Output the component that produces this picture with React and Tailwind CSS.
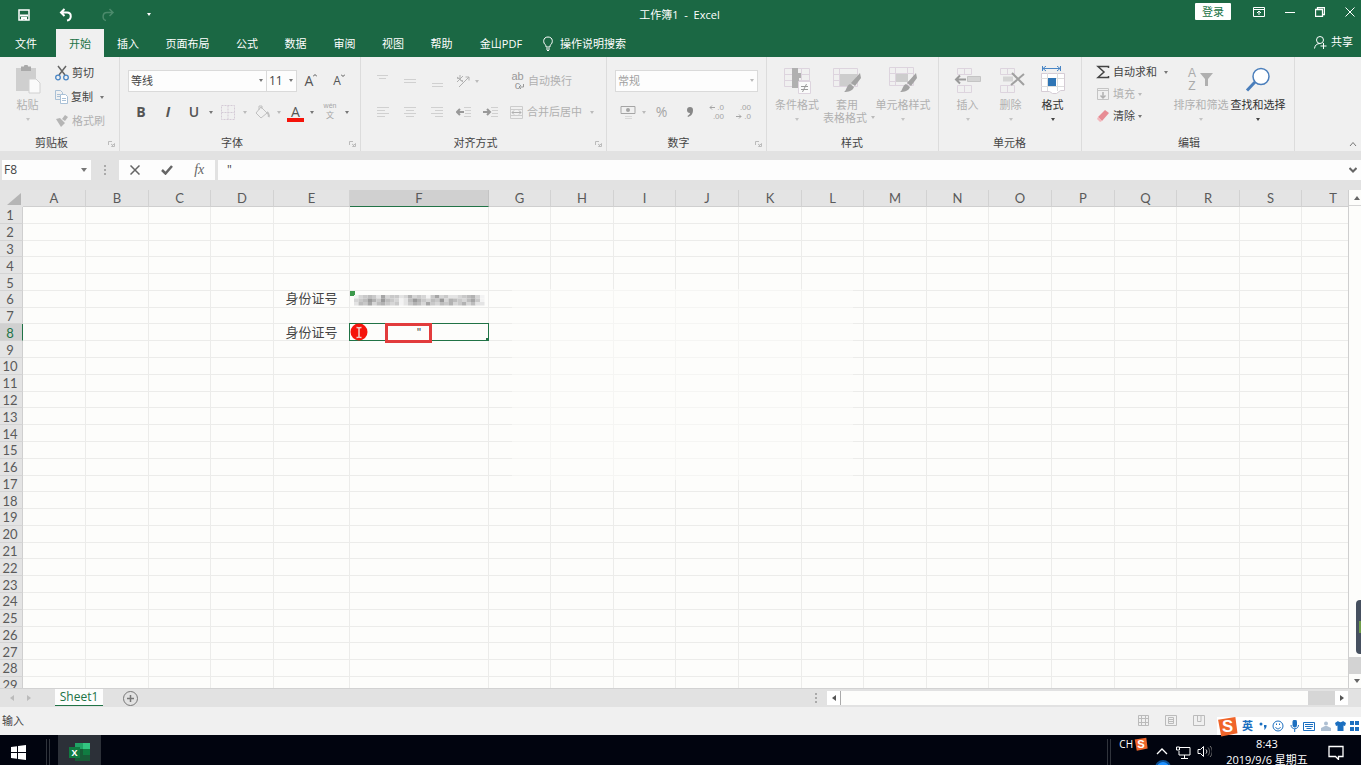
import clsx from 'clsx'

const COLUMNS = [
  ['A', 'w-[63px]'], ['B', 'w-[63px]'], ['C', 'w-[62px]'], ['D', 'w-[63px]'], ['E', 'w-[76px]'],
  ['F', 'w-[139px]'], ['G', 'w-[62px]'], ['H', 'w-[63px]'], ['I', 'w-[62px]'], ['J', 'w-[63px]'],
  ['K', 'w-[63px]'], ['L', 'w-[62px]'], ['M', 'w-[63px]'], ['N', 'w-[62px]'], ['O', 'w-[63px]'],
  ['P', 'w-[63px]'], ['Q', 'w-[62px]'], ['R', 'w-[63px]'], ['S', 'w-[62px]'], ['T', 'w-[63px]'],
]
const ROWS = Array.from({ length: 29 }, (_, i) => i + 1)
const TABS = [
  ['文件', 'w-14 pr-1'], ['开始', 'w-12'], ['插入', 'w-12'], ['页面布局', 'w-[71px]'], ['公式', 'w-12'], ['数据', 'w-[49px]'],
  ['审阅', 'w-[49px]'], ['视图', 'w-12'], ['帮助', 'w-[49px]'], ['金山PDF', 'w-[70px]'],
]
const MASKED = [
  'ecbabd8cbbdc9cbceb8cbddcba9ce',
  'cba79b7abceda79bcab7c9abca8be',
  'dab8ca9bcbedb9ac8bcab9cb9cadd',
]
const GREYS = { 7: '#9a9a9a', 8: '#a6a6a6', 9: '#b2b2b2', a: '#bdbdbd', b: '#c9c9c9', c: '#d6d6d6', d: '#e4e4e4', e: '#f3f3f3' }

function Svg({ w = 16, h = 16, children, className, ...rest }) {
  return (
    <svg width={w} height={h} viewBox={`0 0 ${w} ${h}`} fill="none" stroke="currentColor" className={clsx('shrink-0', className)} aria-hidden="true" {...rest}>
      {children}
    </svg>
  )
}

function Caret({ className = 'text-[#777]' }) {
  return (
    <Svg w={4} h={3} className={className} stroke="none">
      <path d="M0 0h4L2 3z" fill="currentColor" />
    </Svg>
  )
}

function Tool({ label, className, children }) {
  return (
    <button type="button" aria-label={label} className={clsx('flex h-6 items-center justify-center', className)}>
      {children}
    </button>
  )
}

function Group({ title, launcher, className, children }) {
  return (
    <section className={clsx('relative flex shrink-0 flex-col border-r border-[#dcdcdc]', className)}>
      <div className="flex flex-1 pt-1">{children}</div>
      <h2 className="h-[18px] text-center leading-5">{title}</h2>
      {launcher && (
        <button type="button" aria-label={`${title}设置`} className="absolute right-1 bottom-1 text-[#bbb]">
          <Svg w={8} h={6}><path d="M1.500 4V.5H5" /><path d="M7.500 2.500v3h-3zM4 3l2 1.500" /></Svg>
        </button>
      )}
    </section>
  )
}

function BigButton({ lines, icon, enabled, className, inlineCaret }) {
  return (
    <button type="button" className={clsx('flex flex-col items-center pt-1 leading-[13px] whitespace-nowrap', enabled ? 'text-[#333]' : 'text-[#b0b0b0]', className)}>
      <span className="mb-[3px] flex h-[30px] items-center">{icon}</span>
      <span>{lines[0]}</span>
      {inlineCaret ? (
        <span className="flex items-center gap-1 pl-1">{lines[1]}<Caret className="text-[#bbb]" /></span>
      ) : (
        <span className="pt-[7px]"><Caret className={enabled ? 'text-[#444]' : 'text-[#c4c4c4]'} /></span>
      )}
    </button>
  )
}

function TitleBar() {
  return (
    <header className="flex h-[29px] items-center text-white">
      <div className="flex flex-1 items-center pl-[17px]">
        <button type="button" aria-label="保存">
          <Svg w={14} h={14}><path d="M2 2h10v10H2z" strokeWidth="1.500" /><path d="M3 7.500h8M5 12V10h4v2" strokeWidth="2" /></Svg>
        </button>
        <button type="button" aria-label="撤销" className="ml-7">
          <Svg w={14} h={14} strokeWidth="2"><path d="M5.500 1L2 4.500 5.500 8M2.500 4.500H8c5 0 5 7 0 8" /></Svg>
        </button>
        <button type="button" aria-label="恢复" className="ml-7 text-[#4b8a6b]">
          <Svg w={14} h={14} strokeWidth="1.500"><path d="M8.500 1L12 4.500 8.500 8M11.500 4.500H6c-5 0-5 7-1 8" /></Svg>
        </button>
        <button type="button" aria-label="自定义快速访问工具栏" className="ml-8"><Caret className="text-white" /></button>
      </div>
      <h1 className="pr-[13px] whitespace-pre">{'工作簿1  -  Excel'}</h1>
      <div className="flex flex-1 items-center justify-end pr-1.5 pb-1.5">
        <button type="button" className="mr-[22px] h-[17px] w-9 rounded-[1px] bg-white leading-4 text-[#217346]">登录</button>
        <button type="button" aria-label="功能区显示选项" className="mr-5">
          <Svg w={12} h={10}><path d="M.5.5h11v9H.5zM.500 2.500h11M6 8V4M4 6l2-2 2 2" /></Svg>
        </button>
        <button type="button" aria-label="最小化" className="mr-5"><Svg w={10} h={10}><path d="M0 5.500h10" /></Svg></button>
        <button type="button" aria-label="还原" className="mr-5"><Svg w={10} h={10}><path d="M.5 2.500h7v7h-7zM2.500 2V.5h7v7H8" strokeWidth="1.300" /></Svg></button>
        <button type="button" aria-label="关闭"><Svg w={10} h={10}><path d="M.5.5l9 9M9.500.5l-9 9" /></Svg></button>
      </div>
    </header>
  )
}

function TabRow() {
  return (
    <nav className="flex h-7 text-white">
      {TABS.map(([name, width]) => (
        <button key={name} type="button" className={clsx('shrink-0 pt-px text-center whitespace-nowrap', width, name === '开始' && 'bg-[#f0f0f0] text-[#217346]')}>
          {name}
        </button>
      ))}
      <button type="button" className="ml-1.5 flex items-center gap-1.5 pt-px">
        <Svg w={12} h={15}><path d="M4 11V9.500C.5 7 .8 1 6 1s5.500 6 2 8.500V11zM4 13h4M5 14.500h2" /></Svg>
        操作说明搜索
      </button>
      <button type="button" className="ml-auto flex items-center gap-1 pr-2 pb-0.5">
        <Svg w={13} h={13}><circle cx="6" cy="4" r="3.500" /><path d="M.5 12.500C1 9 3 7.500 6 7.500M9.500 7v6M6.500 10h6" /></Svg>
        共享
      </button>
    </nav>
  )
}

function ClipboardGroup() {
  return (
    <Group title="剪贴板" launcher className="w-[120px] [&>h2]:pr-4">
      <button type="button" className="flex w-[55px] shrink-0 flex-col items-center pt-1 leading-[13px] text-[#b0b0b0]">
        <Svg w={26} h={30} className="mb-[3px]" stroke="none">
          <path d="M1 3h20v23H1z" fill="#cfcfcf" /><path d="M6 1.500h3a2 2 0 0 1 4 0h3V6H6z" fill="#aaa" />
          <path d="M14 14h7l4 4v10H14z" fill="#fafafa" stroke="#d0d0d0" />
        </Svg>
        粘贴
        <span className="pt-[7px]"><Caret className="text-[#c4c4c4]" /></span>
      </button>
      <div className="flex flex-col whitespace-nowrap text-[#444]">
        <button type="button" className="flex h-6 items-center gap-[3px]">
          <Svg w={14} h={16}><path d="M3 1l7 9M11 1L4 10" stroke="#666" strokeWidth="1.500" /><g stroke="#4a86c5" strokeWidth="1.300"><circle cx="3" cy="12.500" r="2.300" /><circle cx="11" cy="12.500" r="2.300" /></g></Svg>
          剪切
        </button>
        <button type="button" className="flex h-6 items-center gap-[3px]">
          <Svg w={13} h={14} stroke="#a9c0d6"><path d="M.5.500h5l2 2v7h-7zM2 4.500h3M2 6.500h3" /><path d="M5.500 4.500h5l2 2v7h-7z" fill="#fff" /><path d="M7 8.500h4M7 10.500h4" /></Svg>
          复制
          <span className="ml-1"><Caret /></span>
        </button>
        <button type="button" className="flex h-6 items-center gap-[3px] pl-px text-[#b0b0b0]">
          <Svg w={13} h={12} stroke="none"><path d="M9 0l3 2-3 4-3-2zM0 4l4-1 5 5-4 4z" fill="#b5b5b5" /></Svg>
          格式刷
        </button>
      </div>
    </Group>
  )
}

function FontGroup() {
  return (
    <Group title="字体" launcher className="w-[241px] pr-2 pl-2 [&>h2]:pr-4">
      <div className="flex-1">
        <div className="flex items-center pt-2">
          <span className="relative">
            <select aria-label="字体名称" className="block h-[22px] w-[139px] appearance-none border border-[#dadada] bg-[#fdfdfd] px-0.5 text-[#444]"><option>等线</option></select>
            <span className="pointer-events-none absolute top-[9px] right-1"><Caret /></span>
          </span>
          <span className="relative -ml-px">
            <select aria-label="字号" className="block h-[22px] w-[31px] appearance-none border border-[#dadada] bg-[#fdfdfd] px-0.5 text-xs text-[#444]"><option>11</option></select>
            <span className="pointer-events-none absolute top-[9px] right-1"><Caret /></span>
          </span>
          <Tool label="增大字号" className="w-7 text-sm text-[#555]">A<Svg w={4} h={14}><path d="M0 2.500l2-2 2 2" /></Svg></Tool>
          <Tool label="减小字号" className="w-7 text-xs text-[#555]">A<Svg w={4} h={14}><path d="M0 .5l2 2 2-2" /></Svg></Tool>
        </div>
        <div className="flex items-center pt-[7px] text-[#555]">
          <Tool className="w-[26px] text-sm font-bold">B</Tool>
          <Tool className="w-7 text-sm font-bold italic">I</Tool>
          <Tool className="w-6 text-sm font-semibold">U</Tool>
          <Tool label="下划线选项" className="w-[9px]"><Caret /></Tool>
          <Tool label="边框" className="w-[26px] text-[#d4cbd6]"><Svg w={14} h={15}><path d="M.5.5h13v14H.500zM7 .5v14M.5 7.500h13" strokeDasharray="2 1" /></Svg></Tool>
          <Tool label="边框选项" className="w-2"><Caret className="text-[#bbb]" /></Tool>
          <Tool label="填充颜色" className="w-[27px] text-[#c0c0c0]"><Svg w={15} h={14}><path d="M6 2l6 6-6 5-5-5zM4 5V1h3v3" /><path d="M12 7c2 2 2 4 1.500 5" strokeWidth="2" /></Svg></Tool>
          <Tool label="填充颜色选项" className="w-1.5"><Caret className="text-[#bbb]" /></Tool>
          <Tool label="字体颜色" className="w-[27px] flex-col pt-0.5 text-sm leading-[13px]">A<span className="h-1 w-[17px] shrink-0 bg-[#f5130a]" /></Tool>
          <Tool label="字体颜色选项" className="w-1.5"><Caret /></Tool>
          <Tool label="拼音" className="w-[30px] flex-col font-['Liberation_Sans','Noto_Sans_CJK_SC',sans-serif] text-[8px] leading-[8px] text-[#a5a5a5]"><span className="text-[7px]">wén</span><span className="leading-[12px]">文</span></Tool>
          <Tool label="拼音选项" className="w-1"><Caret /></Tool>
        </div>
      </div>
    </Group>
  )
}

function AlignGroup() {
  const v = ['M1 1.500h11M3 4.500h7', 'M1 5.500h12M1 8.500h12', 'M2 9.500h11M2 12.500h11']
  const h = ['M1 2.500h12M1 5.500h8M1 8.500h12M1 11.500h8', 'M1 2.500h12M3 5.500h8M1 8.500h12M3 11.500h8', 'M1 2.500h12M5 5.500h8M1 8.500h12M5 11.500h8']
  return (
    <Group title="对齐方式" launcher className="w-[246px] pr-2 pl-2 [&>h2]:pr-4">
      <div className="flex-1 text-[#b0b0b0]">
        <div className="flex items-center pt-2">
          {v.map((d, i) => <Tool key={d} label={['顶端对齐', '垂直居中', '底端对齐'][i]} className="w-[27px] text-[#d0d0d0]"><Svg w={14} h={14}><path d={d} /></Svg></Tool>)}
          <Tool label="方向" className="w-[25px]"><Svg w={14} h={14}><path d="M3 13L13 3M13 3H9.500M13 3v3.500" /><path d="M1 3l6 5M1 8l6-6M1 5c2-3 4 4 6 1M4 1v5" /></Svg></Tool>
          <Tool label="方向选项" className="w-1"><Caret className="text-[#bbb]" /></Tool>
          <button type="button" className="ml-8 flex h-6 items-center gap-1">
            <span className="relative flex w-[13px] flex-col font-['Liberation_Sans',sans-serif] text-[11px] leading-[9px] text-[#999]"><span>ab</span><span>c</span><Svg w={6} h={6} className="absolute right-0 bottom-0"><path d="M5.500 0v3H1M3 1L1 3l2 2" /></Svg></span>
            自动换行
          </button>
        </div>
        <div className="flex items-center pt-[7px]">
          {h.map((d, i) => <Tool key={d} label={['左对齐', '居中', '右对齐'][i]} className="w-[27px] text-[#d0d0d0]"><Svg w={14} h={14}><path d={d} /></Svg></Tool>)}
          <Tool label="减少缩进量" className="w-[27px]"><Svg w={15} h={12}><path d="M8 1.500h7M9 4.500h6M9 7.500h6M8 10.500h7" stroke="#d0d0d0" /><path d="M8 6H1M4 3L1 6l3 3" stroke="#999" strokeWidth="2" /></Svg></Tool>
          <Tool label="增加缩进量" className="w-[27px]"><Svg w={15} h={12}><path d="M8 1.500h7M9 4.500h6M9 7.500h6M8 10.500h7" stroke="#d0d0d0" /><path d="M0 6h7M4 3l3 3-3 3" stroke="#999" strokeWidth="2" /></Svg></Tool>
          <button type="button" className="ml-1.5 flex h-6 items-center gap-1 whitespace-nowrap">
            <Svg w={13} h={13}><path d="M.5.5h12v12H.5zM.5 3.500h12M.5 9.500h12" stroke="#ccc" /><path d="M2 6.500h9M4 4.500l-2 2 2 2M9 4.500l2 2-2 2" /></Svg>
            合并后居中
            <span className="ml-1"><Caret className="text-[#bbb]" /></span>
          </button>
        </div>
      </div>
    </Group>
  )
}

function NumberGroup() {
  const decimal = "w-[27px] flex-col items-end pr-1.5 font-['Liberation_Sans',sans-serif] text-[8px] leading-[9px]"
  return (
    <Group title="数字" launcher className="w-[160px] pr-2 pl-2 [&>h2]:pr-4">
      <div className="flex-1 text-[#a5a5a5]">
        <div className="relative pt-[9px]">
          <select aria-label="数字格式" className="block h-[22px] w-[143px] appearance-none border border-[#dadada] bg-[#fdfdfd] px-0.5 text-[#a0a0a0]"><option>常规</option></select>
          <span className="pointer-events-none absolute top-[18px] right-1"><Caret className="text-[#bbb]" /></span>
        </div>
        <div className="flex items-center pt-2">
          <Tool label="会计数字格式" className="w-[26px]"><Svg w={16} h={14}><path d="M4 1.500H1v7h3M12 1.500h3v7h-3M4 1.500h8M4 8.500h8" strokeDasharray="9 0" /><circle cx="8" cy="5" r="2" fill="currentColor" stroke="none" /><path d="M5 11.500h7M5 13.500h7" stroke="#d8d8d8" /></Svg></Tool>
          <Tool label="会计格式选项" className="w-1.5"><Caret className="text-[#bbb]" /></Tool>
          <Tool className="w-[29px] text-sm">%</Tool>
          <Tool label="千位分隔样式" className="w-[27px]"><Svg w={8} h={12} stroke="none"><path d="M4 1a3 3 0 0 1 3 3c0 4-2 6-5 7l-.5-1C3 9 4 8 4 7a3 3 0 0 1 0-6z" fill="#888" /></Svg></Tool>
          <Tool label="增加小数位数" className={decimal}><span className="flex items-center gap-0.5"><Svg w={6} h={5}><path d="M6 2.500H1M3 .5l-2 2 2 2" /></Svg>.0</span><span>.00</span></Tool>
          <Tool label="减少小数位数" className={decimal}><span>.00</span><span className="flex items-center gap-0.5"><Svg w={6} h={5}><path d="M0 2.500h5M3 .5l2 2-2 2" /></Svg>.0</span></Tool>
        </div>
      </div>
    </Group>
  )
}

function StylesGroup() {
  const brush = <path d="M27 7l1 5-6 8-4-3zM17 18l4 3c-1 4-6 5-10 5 3-2 2-6 6-8z" fill="#a3a3a3" stroke="none" />
  return (
    <Group title="样式" className="w-[172px] pl-[7px] [&>h2]:pr-2">
      <BigButton className="w-[46px]" lines={['条件格式']} icon={<Svg w={28} h={28} stroke="#ddd4de"><path d="M1.500 2.500h25v18h-25zM1.500 8.500h25M1.500 14.500h25M18.500 2v18" /><path d="M9 2h6v5h3v5h-2v4h-1v6H9z" fill="#b0b0b0" stroke="none" /><path d="M15.500 15.500h12v12h-12z" fill="#fafafa" /><path d="M18 20.500h7M18 23.500h7M23.500 18l-4 8" stroke="#999" /></Svg>} />
      <BigButton className="w-[54px]" lines={['套用', '表格格式']} inlineCaret icon={<Svg w={28} h={28} stroke="#ddd4de"><path d="M.5 2.500h24v18H.5zM.5 8.500h24M.5 14.500h24M6.500 2v18" /><path d="M7 8h18l-6 12H7z" fill="#cdcdcd" stroke="none" />{brush}</Svg>} />
      <BigButton className="w-[58px]" lines={['单元格样式']} icon={<Svg w={28} h={28} stroke="#ddd4de"><path d="M.5 1.500h24v18H.5zM.5 7.500h24M.5 15.500h24M6.500 1v18M18.500 1v18" /><path d="M7 8h12v8H7z" fill="#cdcdcd" stroke="none" />{brush}</Svg>} />
    </Group>
  )
}

function CellsGroup() {
  const grid = <path d="M3.500 1.500h14v6h-14zM10.500 1.500v6M3.500 18.500h14v7h-14zM10.500 18.500v7" stroke="#ddd4de" />
  return (
    <Group title="单元格" className="w-[143px] pl-[7px] [&>h2]:pr-2">
      <BigButton className="w-[43px]" lines={['插入']} icon={<Svg w={27} h={27}>{grid}<path d="M13.500 9.500h13v5h-13z" fill="#d4d4d4" stroke="#c4c4c4" /><path d="M12 12.500H2M6 8.500l-4 4 4 4" stroke="#9a9a9a" strokeWidth="2" /></Svg>} />
      <BigButton className="w-[43px]" lines={['删除']} icon={<Svg w={28} h={27}>{grid}<path d="M6 9.500h10v5H6z" fill="#d4d4d4" stroke="none" /><path d="M15 6l12 12M27 7L14 18" stroke="#a0a0a0" strokeWidth="2" /></Svg>} />
      <BigButton enabled className="w-[41px]" lines={['格式']} icon={<Svg w={26} h={28}><path d="M3 2.500h17M6 0L3 2.500 6 5M17 0l3 2.500L17 5M2.500 0v5M20.500 0v5" stroke="#4a86c5" /><path d="M1.500 7.500h23v17h-4l-4 3h-4l-3-2h-8z" fill="#fff" stroke="#d5ccd5" /><path d="M7.500 7v18M17.500 7v18M1 12.500h23M1 20.500h23" stroke="#ddd" /><path d="M8 12h8v8H8z" fill="#2f75b5" stroke="none" /></Svg>} />
    </Group>
  )
}

function EditGroup() {
  return (
    <Group title="编辑" className="w-[213px] pl-[14px] [&>h2]:pr-3">
      <div className="flex w-[78px] flex-col whitespace-nowrap text-[#444]">
        <button type="button" className="flex h-[22px] items-center gap-[3px]">
          <Svg w={14} h={14} strokeWidth="1.500"><path d="M12.500 3V1.500H2L8 7l-6 5.500h10.500V11" /></Svg>
          自动求和
          <span className="ml-1"><Caret /></span>
        </button>
        <button type="button" className="flex h-[22px] items-center gap-[3px] text-[#b0b0b0]">
          <Svg w={14} h={13}><path d="M1.500.5h11v11h-11zM1 2.500h12" stroke="#c4c4c4" /><path d="M7 4v6M4.500 7.500L7 10l2.500-2.500" strokeWidth="1.500" /></Svg>
          填充 <Caret className="text-[#bbb]" />
        </button>
        <button type="button" className="flex h-[22px] items-center gap-[3px]">
          <Svg w={14} h={12} stroke="none"><path d="M9 0l4 3-7 8-4-4z" fill="#e78c94" /><path d="M2 7l4 4-2 1-3-3z" fill="#f3b8bd" /></Svg>
          清除 <Caret />
        </button>
      </div>
      <BigButton className="w-[54px]" lines={['排序和筛选']} icon={<span className="flex items-center"><span className="flex flex-col font-['Liberation_Sans',sans-serif] text-[12px] leading-[13px] text-[#aaa]"><span>A</span><span>Z</span></span><Svg w={14} h={14} stroke="none" className="ml-1"><path d="M0 0h13L8 6v7H5V6z" fill="#b0b0b0" /></Svg></span>} />
      <BigButton enabled className="w-[60px]" lines={['查找和选择']} icon={<Svg w={26} h={26}><circle cx="16" cy="9.500" r="8" fill="#fff" stroke="#4a7ebb" strokeWidth="1.500" /><path d="M10 15l-8 8.500" stroke="#4a7ebb" strokeWidth="3" /></Svg>} />
    </Group>
  )
}

function FormulaBar() {
  return (
    <div className="flex h-5 items-stretch text-[#444]">
      <div className="ml-0.5 flex w-[89px] items-center bg-[#fdfdfd] pr-1">
        <input aria-label="名称框" defaultValue="F8" className="w-full min-w-0 px-0.5 text-xs outline-none" />
        <Svg w={6} h={4} stroke="none"><path d="M0 0h6L3 4z" fill="#777" /></Svg>
      </div>
      <div className="flex w-7 items-center justify-center text-[#aaa]"><Svg w={2} h={11} stroke="none" fill="currentColor"><path d="M0 0h2v2H0zM0 4h2v2H0zM0 8h2v2H0z" /></Svg></div>
      <div className="flex w-24 items-center justify-around bg-[#fdfdfd] text-[#666]">
        <button type="button" aria-label="取消"><Svg w={10} h={10} strokeWidth="1.500"><path d="M.5.500l9 9M9.500.5l-9 9" /></Svg></button>
        <button type="button" aria-label="输入"><Svg w={12} h={10} strokeWidth="2.500"><path d="M1 5l3.500 3.500L11 1" /></Svg></button>
        <button type="button" aria-label="插入函数" className="font-['Liberation_Serif',serif] text-sm leading-5 italic">fx</button>
      </div>
      <input aria-label="编辑栏" defaultValue={'"'} className="ml-[3px] min-w-0 flex-1 bg-[#fdfdfd] px-[9px] text-xs outline-none" />
      <button type="button" aria-label="展开编辑栏" className="bg-[#fdfdfd] pr-1 text-[#666]"><Svg w={8} h={6} strokeWidth="2"><path d="M.5 1L4 4.500 7.500 1" /></Svg></button>
    </div>
  )
}

function MaskedId() {
  return (
    <span className="relative block h-full">
      <Svg w={6} h={6} className="absolute top-0 left-0" stroke="none"><path d="M0 0h5v5H0z" fill="#3d9a4c" /></Svg>
      <Svg w={134} h={12} stroke="none" className="absolute top-[3px] left-1">
        {MASKED.map((line, y) => [...line].map((c, x) => (
          <rect key={`${x}-${y}`} x={x * 4.500} y={y * 3.500 + 1} width="4.500" height="3.500" fill={GREYS[c]} />
        )))}
      </Svg>
    </span>
  )
}

function ActiveCell() {
  return (
    <span className="relative block h-full text-center">
      {'"'}
      <span className="absolute -inset-px border border-[#217346]" />
      <span className="absolute -right-px -bottom-px size-[3px] bg-[#217346]" />
      <span className="absolute -top-px left-[35px] h-5 w-[47px] border-[3px] border-[#e23c3c]" />
      <Svg w={18} h={18} className="absolute -top-px left-0">
        <circle cx="9" cy="9" r="8.500" fill="#f5140c" stroke="none" />
        <path d="M6.500 4.500c1 0 2 0 2.500.5.5-.5 1.500-.5 2.500-.5M9 5v9M6.500 14.500c1 0 2 0 2.500-.5.5.5 1.500.5 2.500.5" stroke="#f0d0cc" strokeWidth="1.500" />
      </Svg>
    </span>
  )
}

function cellContent(row, col) {
  if (col === 'E' && (row === 6 || row === 8)) return '身份证号'
  if (col === 'F' && row === 6) return <MaskedId />
  if (col === 'F' && row === 8) return <ActiveCell />
  return null
}

function Grid() {
  return (
    <div className="relative min-w-0 flex-1 overflow-hidden bg-[#fdfdfb]">
      <table className="h-[504px] w-[1365px] table-fixed border-separate border-spacing-0 font-['Lato','Noto_Sans_CJK_SC',sans-serif] text-[#5a5a5a]">
        <colgroup>
          <col className="w-[23px]" />
          {COLUMNS.map(([name, width]) => <col key={name} className={width} />)}
        </colgroup>
        <thead>
          <tr className="h-[17px] bg-[#e4e4e4] text-[13px] leading-4">
            <th className="p-0" aria-label="全选"><Svg w={14} h={12} className="ml-[7px]" stroke="none"><path d="M14 0v12H0z" fill="#b5b5b5" /></Svg></th>
            {COLUMNS.map(([name]) => (
              <th key={name} scope="col" className={clsx('border-r border-b p-0 font-normal', name === 'F' ? 'border-r-[#c4c4c4] border-b-[#217346] bg-[#d0d0d0]' : 'border-r-[#d2d2d2] border-b-[#cfcfcf]')}>{name}</th>
            ))}
          </tr>
        </thead>
        <tbody>
          {ROWS.map((row) => (
            <tr key={row} className="text-xs leading-[15px]">
              <th scope="row" className={clsx('h-4 border-r border-b border-b-[#d4d4d4] p-0 pt-px pr-0.5 text-[13px] leading-[14px] font-normal', row === 8 ? 'border-r-[#217346] bg-[#d0d0d0] text-[#217346]' : 'border-r-[#cfcfcf] bg-[#e4e4e4]')}>{row}</th>
              {COLUMNS.map(([col]) => (
                <td key={col} className={clsx('h-4 border-r border-b border-[#ececea] p-0 text-center text-[#444]', col === 'E' && 'text-[13px]')}>{cellContent(row, col)}</td>
              ))}
            </tr>
          ))}
        </tbody>
      </table>
      {/* faded patch over the middle of the sheet */}
      <div className="absolute top-[99px] left-[512px] h-[191px] w-[341px] bg-[#fdfdfb]/50" />
    </div>
  )
}

function VerticalScroll() {
  return (
    <div className="relative flex w-[13px] shrink-0 flex-col border-l border-[#cfcfcf] bg-[#fdfdfb]">
      <button type="button" aria-label="向上滚动" className="flex h-4 justify-center border-b border-[#d5d5d5] pt-1.5 pl-1"><Svg w={6} h={4} stroke="none"><path d="M0 4h6L3 0z" fill="#666" /></Svg></button>
      <div className="flex-1" />
      <div className="h-[17px] bg-[#d3d3d3]" />
      <button type="button" aria-label="向下滚动" className="flex h-[14px] items-center justify-center pl-1"><Svg w={6} h={4} stroke="none"><path d="M0 0h6L3 4z" fill="#666" /></Svg></button>
      <div className="absolute right-0 bottom-[34px] flex h-[54px] w-[5px] items-center rounded-l bg-[#46505f] pl-[3px]"><span className="h-3 w-0.5 bg-[#6f9d4a]" /></div>
    </div>
  )
}

function SheetBar() {
  return (
    <div className="flex h-[19px] items-stretch border-t border-[#d2d2d2] bg-[#e2e2e2] text-[#bbb]">
      <button type="button" aria-label="上一张" className="ml-2.5"><Svg w={4} h={6} stroke="none"><path d="M4 0v6L0 3z" fill="currentColor" /></Svg></button>
      <button type="button" aria-label="下一张" className="ml-[13px]"><Svg w={4} h={6} stroke="none"><path d="M0 0v6l4-3z" fill="currentColor" /></Svg></button>
      <button type="button" className="ml-6 h-[17px] w-12 border-b border-[#217346] bg-[#fdfdfd] text-xs leading-4 text-[#217346]">Sheet1</button>
      <button type="button" aria-label="新工作表" className="ml-5 text-[#777]"><Svg w={15} h={15}><circle cx="7.500" cy="7.500" r="7" /><path d="M7.500 4v7M4 7.500h7" strokeWidth="1.500" /></Svg></button>
      <div className="flex-1" />
      <div className="flex w-3 items-center text-[#aaa]"><Svg w={2} h={10} stroke="none" fill="currentColor"><path d="M0 0h2v2H0zM0 4h2v2H0zM0 8h2v2H0z" /></Svg></div>
      <div className="mr-[13px] flex w-[521px] py-0.5">
        <button type="button" aria-label="向左滚动" className="flex w-[14px] items-center justify-center border-r border-[#aaa] bg-white"><Svg w={4} h={6} stroke="none"><path d="M4 0v6L0 3z" fill="#555" /></Svg></button>
        <div className="flex-1 bg-[#fdfdfb]" />
        <div className="w-[27px] bg-[#d6d6d6]" />
        <button type="button" aria-label="向右滚动" className="flex w-[13px] items-center justify-center bg-white"><Svg w={4} h={6} stroke="none"><path d="M0 0v6l4-3z" fill="#555" /></Svg></button>
      </div>
    </div>
  )
}

function SogouLogo({ size }) {
  return (
    <svg width={size} height={size} viewBox="0 0 20 20" className="shrink-0 font-['Liberation_Sans',sans-serif]" aria-hidden="true">
      <path d="M1 3.500L17.500 1 19.500 16.500 4 19.500z" fill="#f0652a" />
      <text x="10" y="15.500" textAnchor="middle" fill="#fff" fontSize="16" fontWeight="700">S</text>
    </svg>
  )
}

function StatusBar() {
  return (
    <div className="relative flex h-7 items-center bg-[#f0f0f0] pl-0.5 text-[#444]">
      <span>输入</span>
      <div className="mr-[156px] mb-0.5 ml-auto flex gap-4 text-[#bbb]">
        <button type="button" aria-label="普通"><Svg w={11} h={11}><path d="M.5.5h10v10H.5zM.5 3.500h10M.5 7.500h10M3.500 0v11M7.500 0v11" /></Svg></button>
        <button type="button" aria-label="页面布局"><Svg w={12} h={11}><path d="M.5.5h11v10H.5zM3.500 2.500h5v6h-5zM3.500 4.500h5M3.500 6.500h5" /></Svg></button>
        <button type="button" aria-label="分页预览"><Svg w={12} h={11}><path d="M.5.5h11v10H.5zM4.500 0v6.500H8V0" /></Svg></button>
      </div>
      {/* input method toolbar floats over the status bar */}
      <div className="absolute right-0 bottom-0 flex h-[18px] w-36 items-center bg-white text-[#1b6fc0]">
        <SogouLogo size={21} />
        <span className="ml-1 font-bold">英</span>
        <Svg w={10} h={8} className="ml-1.5" stroke="none"><circle cx="2" cy="2" r="1.500" fill="currentColor" /><path d="M5 3h2.500v2L6 7.500H5l.8-2H5z" fill="currentColor" /></Svg>
        <Svg w={12} h={12} className="ml-[3px]"><circle cx="6" cy="6" r="5" /><path d="M3.500 7c1 2.500 4 2.500 5 0M4.500 3.500v1.500M7.500 3.500v1.500" /></Svg>
        <Svg w={9} h={12} className="ml-1.5"><rect x="3" y="0" width="3.500" height="7" rx="1.500" fill="currentColor" /><path d="M1 5c0 5 7.500 5 7.500 0M4.700 9v3" /></Svg>
        <Svg w={12} h={9} className="ml-1"><path d="M.5.5h11v8H.5zM2 2.500h8M2 4.500h8M3.500 6.500h5" /></Svg>
        <Svg w={10} h={11} className="ml-1.5" stroke="none"><circle cx="5" cy="2.500" r="2" fill="#aebfd2" /><path d="M0 10V7l4-2h2l4 2v3z" fill="#aebfd2" /></Svg>
        <Svg w={11} h={10} className="ml-1" stroke="none"><path d="M3 0c1 1.500 4 1.500 5 0l3 2-1 3-1.500-.5V10h-6V4.500L1 5 0 2z" fill="currentColor" /></Svg>
        <Svg w={9} h={10} className="ml-1" stroke="none"><path d="M0 0h4v4H0zM5 0h4v4H5zM0 6h4v4H0zM5 6h4v4H5z" fill="currentColor" /></Svg>
      </div>
    </div>
  )
}

function Taskbar() {
  return (
    <footer className="flex h-[30px] shrink-0 items-stretch overflow-hidden bg-[#01040f] text-white">
      <button type="button" aria-label="开始菜单" className="pt-1 pl-[11px]"><Svg w={15} h={15} stroke="none"><path d="M0 2l6-.800V7H0zM7 1l8-1v7H7zM0 8h6v5.800L0 13zM7 8h8v7l-8-1z" fill="#fff" /></Svg></button>
      <div className="mt-1 ml-5 w-1 border-x border-[#30343c]" />
      <button type="button" aria-label="Excel" className="ml-2 flex w-[43px] items-center justify-center bg-[#2c3038] pt-1">
        <svg width="22" height="20" viewBox="0 0 22 20" aria-hidden="true">
          <path d="M6 1h15v18H6z" fill="#185c37" /><path d="M6 1h8v6H6z" fill="#21a366" /><path d="M14 1h7v6h-7z" fill="#33c481" /><path d="M14 7h7v6h-7z" fill="#107c41" />
          <path d="M0 5h11v11H0z" fill="#107c41" />
          <text x="5.500" y="14" textAnchor="middle" fill="#fff" fontSize="9" fontWeight="700">X</text>
        </svg>
      </button>
      <div className="flex-1" />
      <div className="mt-1 w-1 border-x border-[#30343c]" />
      <span className="ml-2 pt-0.5 text-[10px] leading-[15px]">CH</span>
      <span className="ml-px pt-0.5"><SogouLogo size={14} /></span>
      <div className="relative ml-2 w-3 pt-[13px]">
        <Svg w={12} h={7}><path d="M1 6l5-5 5 5" strokeWidth="1.300" /></Svg>
        <span className="absolute top-[25px] -left-px size-4 rounded-full border-2 border-[#0b4f94] bg-[#1e90ff]" />
      </div>
      <Svg w={15} h={13} className="mt-[11px] ml-2"><path d="M4 1.500h10v7.500H3V5M8.500 9v3M5 12.500h7M.5 1v3h3V1z" /></Svg>
      <Svg w={15} h={13} className="mt-[10px] ml-1.5"><path d="M1 4.500h2.500l3-3v10l-3-3H1zM9 4.500c1 1 1 3 0 4" /><path d="M11 2.500c2 2 2 6 0 8M13 1c3 3 3 8 0 11" stroke="#777" /></Svg>
      <div className="ml-3 flex w-[86px] shrink-0 flex-col items-center pt-px leading-[16px] whitespace-nowrap"><span>8:43</span><span>2019/9/6 星期五</span></div>
      <button type="button" aria-label="通知" className="mr-[17px] ml-[18px] pt-1"><Svg w={16} h={15}><path d="M1 1.500h14v10h-4.500v3l-3-3H1z" strokeWidth="1.300" /></Svg></button>
    </footer>
  )
}

export default function App() {
  return (
    <div className="flex h-screen flex-col overflow-hidden bg-[#e2e2e2] font-['Open_Sans','Noto_Sans_CJK_SC',sans-serif] text-[11px] leading-4">
      <div className="shrink-0 bg-[#1b6844]">
        <TitleBar />
        <TabRow />
      </div>
      <div className="relative mb-[9px] flex h-[94px] shrink-0 overflow-hidden bg-[#f0f0f0] text-[#444]">
        <ClipboardGroup />
        <FontGroup />
        <AlignGroup />
        <NumberGroup />
        <StylesGroup />
        <CellsGroup />
        <EditGroup />
        <button type="button" aria-label="折叠功能区" className="absolute right-1 bottom-1 text-[#777]"><Svg w={8} h={6}><path d="M1 5l3-3.500L7 5" /></Svg></button>
      </div>
      <FormulaBar />
      <main className="flex min-h-0 flex-1 pt-[10px]">
        <Grid />
        <VerticalScroll />
      </main>
      <SheetBar />
      <StatusBar />
      <Taskbar />
    </div>
  )
}
